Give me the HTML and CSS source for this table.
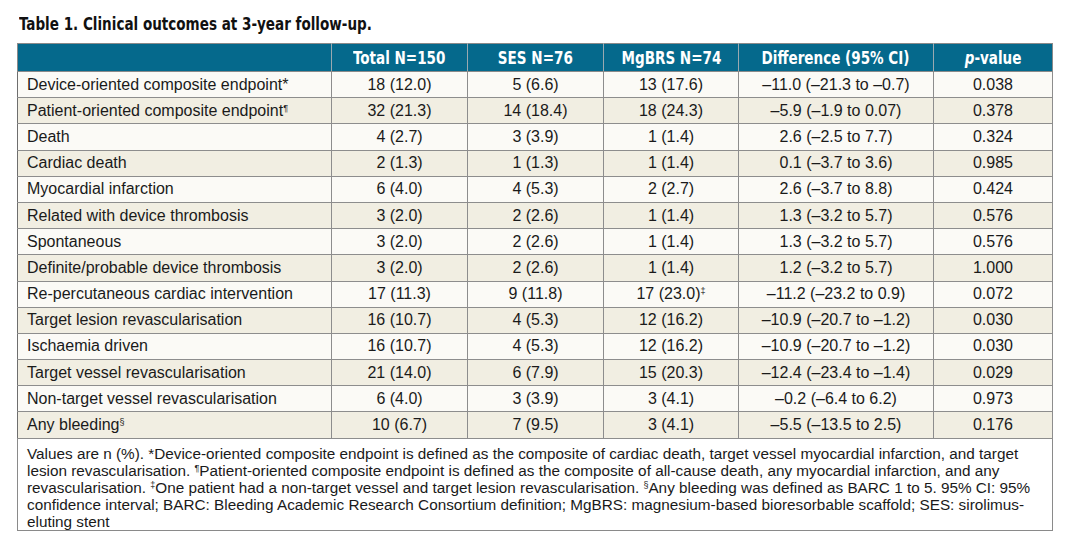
FILE: index.html
```html
<!DOCTYPE html>
<html>
<head>
<meta charset="utf-8">
<link rel="stylesheet" href="styles.css">
</head>
<body>
<div class="page">
  <h1 class="title"><span class="narrow">Table 1. Clinical outcomes at 3-year follow-up.</span></h1>
  <table class="tbl">
    <colgroup>
      <col class="c-label"><col class="c-num"><col class="c-num"><col class="c-num2"><col class="c-diff"><col class="c-p">
    </colgroup>
    <thead>
      <tr>
        <th></th>
        <th><span class="narrow">Total N=150</span></th>
        <th><span class="narrow">SES N=76</span></th>
        <th><span class="narrow">MgBRS N=74</span></th>
        <th><span class="narrow">Difference (95% CI)</span></th>
        <th><span class="narrow"><i>p</i>-value</span></th>
      </tr>
    </thead>
    <tbody>
      <tr><td>Device-oriented composite endpoint*</td><td>18 (12.0)</td><td>5 (6.6)</td><td>13 (17.6)</td><td>–11.0 (–21.3 to –0.7)</td><td>0.038</td></tr>
      <tr><td>Patient-oriented composite endpoint<sup>¶</sup></td><td>32 (21.3)</td><td>14 (18.4)</td><td>18 (24.3)</td><td>–5.9 (–1.9 to 0.07)</td><td>0.378</td></tr>
      <tr><td>Death</td><td>4 (2.7)</td><td>3 (3.9)</td><td>1 (1.4)</td><td>2.6 (–2.5 to 7.7)</td><td>0.324</td></tr>
      <tr><td>Cardiac death</td><td>2 (1.3)</td><td>1 (1.3)</td><td>1 (1.4)</td><td>0.1 (–3.7 to 3.6)</td><td>0.985</td></tr>
      <tr><td>Myocardial infarction</td><td>6 (4.0)</td><td>4 (5.3)</td><td>2 (2.7)</td><td>2.6 (–3.7 to 8.8)</td><td>0.424</td></tr>
      <tr><td>Related with device thrombosis</td><td>3 (2.0)</td><td>2 (2.6)</td><td>1 (1.4)</td><td>1.3 (–3.2 to 5.7)</td><td>0.576</td></tr>
      <tr><td>Spontaneous</td><td>3 (2.0)</td><td>2 (2.6)</td><td>1 (1.4)</td><td>1.3 (–3.2 to 5.7)</td><td>0.576</td></tr>
      <tr><td>Definite/probable device thrombosis</td><td>3 (2.0)</td><td>2 (2.6)</td><td>1 (1.4)</td><td>1.2 (–3.2 to 5.7)</td><td>1.000</td></tr>
      <tr><td>Re-percutaneous cardiac intervention</td><td>17 (11.3)</td><td>9 (11.8)</td><td>17 (23.0)<sup>‡</sup></td><td>–11.2 (–23.2 to 0.9)</td><td>0.072</td></tr>
      <tr><td>Target lesion revascularisation</td><td>16 (10.7)</td><td>4 (5.3)</td><td>12 (16.2)</td><td>–10.9 (–20.7 to –1.2)</td><td>0.030</td></tr>
      <tr><td>Ischaemia driven</td><td>16 (10.7)</td><td>4 (5.3)</td><td>12 (16.2)</td><td>–10.9 (–20.7 to –1.2)</td><td>0.030</td></tr>
      <tr><td>Target vessel revascularisation</td><td>21 (14.0)</td><td>6 (7.9)</td><td>15 (20.3)</td><td>–12.4 (–23.4 to –1.4)</td><td>0.029</td></tr>
      <tr><td>Non-target vessel revascularisation</td><td>6 (4.0)</td><td>3 (3.9)</td><td>3 (4.1)</td><td>–0.2 (–6.4 to 6.2)</td><td>0.973</td></tr>
      <tr><td>Any bleeding<sup>§</sup></td><td>10 (6.7)</td><td>7 (9.5)</td><td>3 (4.1)</td><td>–5.5 (–13.5 to 2.5)</td><td>0.176</td></tr>
    </tbody>
    <tfoot>
      <tr>
        <td colspan="6">Values are n (%). *Device-oriented composite endpoint is defined as the composite of cardiac death, target vessel myocardial infarction, and target<br>lesion revascularisation. <sup>¶</sup>Patient-oriented composite endpoint is defined as the composite of all-cause death, any myocardial infarction, and any<br>revascularisation. <sup>‡</sup>One patient had a non-target vessel and target lesion revascularisation. <sup>§</sup>Any bleeding was defined as BARC 1 to 5. 95% CI: 95%<br>confidence interval; BARC: Bleeding Academic Research Consortium definition; MgBRS: magnesium-based bioresorbable scaffold; SES: sirolimus-<br>eluting stent</td>
      </tr>
    </tfoot>
  </table>
</div>
</body>
</html>
```

FILE: styles.css
```css
html, body {
  margin: 0;
  padding: 0;
  background: #ffffff;
}
.page {
  padding: 14px 17px 0 17px;
}
.title {
  margin: 0 0 8px 2px;
  font-family: "Liberation Sans Narrow", "DejaVu Sans Condensed", "Liberation Sans", sans-serif;
  font-weight: bold;
  font-size: 17px;
  line-height: 21px;
  color: #111;
  white-space: nowrap;
}
.narrow {
  display: inline-block;
  transform: scaleX(0.885);
  white-space: nowrap;
}
.title .narrow {
  transform-origin: left center;
}
.tbl {
  width: 1035px;
  border-collapse: collapse;
  table-layout: fixed;
  font-family: "Liberation Sans", Arial, sans-serif;
  font-size: 16px;
  color: #1a1a1a;
  border: 1px solid #8a8a8a;
}
.c-label { width: 314px; }
.c-num { width: 136px; }
.c-num2 { width: 135px; }
.c-diff { width: 195px; }
.c-p { width: 119px; }
.tbl thead th {
  background: #05698c;
  color: #ffffff;
  font-family: "Liberation Sans Narrow", "DejaVu Sans Condensed", "Liberation Sans", sans-serif;
  font-weight: bold;
  font-size: 17px;
  height: 27px;
  padding: 0;
  text-align: center;
  border-left: 1px solid #9aa9b0;
  border-bottom: 1px solid #8a8a8a;
}
.tbl thead th:first-child {
  border-left: none;
}
.tbl tbody td {
  height: 25.2px;
  padding: 0;
  text-align: center;
  border: 1px solid #8d8d8d;
  border-left-color: #6e6e6e;
  white-space: nowrap;
}
.tbl tbody td:first-child {
  text-align: left;
  padding-left: 9px;
}
.tbl tbody tr:nth-child(odd) td {
  background: #fbfaf6;
}
.tbl tbody tr:nth-child(even) td {
  background: #f1eee2;
}
.tbl sup {
  font-size: 9px;
  vertical-align: 5px;
  line-height: 0;
}
.tbl tfoot td {
  background: #ffffff;
  font-size: 15.3px;
  padding: 6px 9px 0 9px;
  line-height: 17px;
  white-space: nowrap;
  border: 1px solid #8a8a8a;
}
```
